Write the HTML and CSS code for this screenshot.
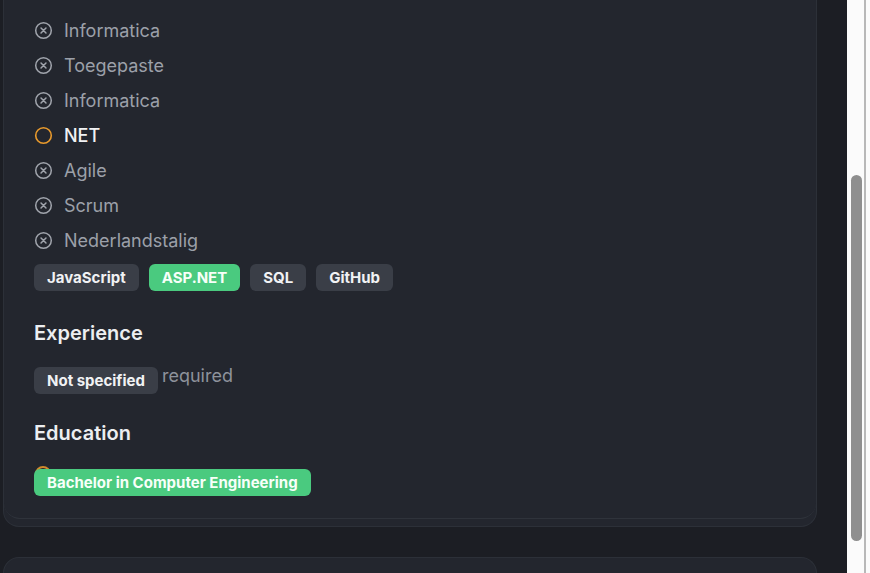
FILE: index.html
```html
<!DOCTYPE html>
<html>
<head>
<meta charset="utf-8">
<link rel="stylesheet" href="styles.css">
</head>
<body>
<div class="app">
  <main class="main">
    <div class="card-wrap">
      <div class="card">
        <ul class="reqs">
          <li class="req miss"><svg class="ic" viewBox="0 0 20 20"><circle cx="10" cy="10" r="8.2" fill="none" stroke="currentColor" stroke-width="1.6"/><path d="M7.4 7.4l5.2 5.2M12.6 7.4l-5.2 5.2" stroke="currentColor" stroke-width="1.6" stroke-linecap="round"/></svg><span>Informatica</span></li>
          <li class="req miss"><svg class="ic" viewBox="0 0 20 20"><circle cx="10" cy="10" r="8.2" fill="none" stroke="currentColor" stroke-width="1.6"/><path d="M7.4 7.4l5.2 5.2M12.6 7.4l-5.2 5.2" stroke="currentColor" stroke-width="1.6" stroke-linecap="round"/></svg><span>Toegepaste</span></li>
          <li class="req miss"><svg class="ic" viewBox="0 0 20 20"><circle cx="10" cy="10" r="8.2" fill="none" stroke="currentColor" stroke-width="1.6"/><path d="M7.4 7.4l5.2 5.2M12.6 7.4l-5.2 5.2" stroke="currentColor" stroke-width="1.6" stroke-linecap="round"/></svg><span>Informatica</span></li>
          <li class="req part"><svg class="ic" viewBox="0 0 20 20"><circle cx="10" cy="10" r="8.2" fill="none" stroke="currentColor" stroke-width="1.7"/></svg><span>NET</span></li>
          <li class="req miss"><svg class="ic" viewBox="0 0 20 20"><circle cx="10" cy="10" r="8.2" fill="none" stroke="currentColor" stroke-width="1.6"/><path d="M7.4 7.4l5.2 5.2M12.6 7.4l-5.2 5.2" stroke="currentColor" stroke-width="1.6" stroke-linecap="round"/></svg><span>Agile</span></li>
          <li class="req miss"><svg class="ic" viewBox="0 0 20 20"><circle cx="10" cy="10" r="8.2" fill="none" stroke="currentColor" stroke-width="1.6"/><path d="M7.4 7.4l5.2 5.2M12.6 7.4l-5.2 5.2" stroke="currentColor" stroke-width="1.6" stroke-linecap="round"/></svg><span>Scrum</span></li>
          <li class="req miss"><svg class="ic" viewBox="0 0 20 20"><circle cx="10" cy="10" r="8.2" fill="none" stroke="currentColor" stroke-width="1.6"/><path d="M7.4 7.4l5.2 5.2M12.6 7.4l-5.2 5.2" stroke="currentColor" stroke-width="1.6" stroke-linecap="round"/></svg><span>Nederlandstalig</span></li>
        </ul>
        <div class="tags">
          <span class="tag">JavaScript</span>
          <span class="tag green">ASP.NET</span>
          <span class="tag">SQL</span>
          <span class="tag">GitHub</span>
        </div>
        <h3 class="sec sec-exp">Experience</h3>
        <div class="exp"><span class="tag">Not specified</span><span class="muted">required</span></div>
        <h3 class="sec sec-edu">Education</h3>
        <div class="edu"><span class="dot"></span><span class="tag green">Bachelor in Computer Engineering</span></div>
      </div>
    </div>
    <div class="card-next"></div>
  </main>
  <div class="scrollbar"><div class="thumb"></div></div>
</div>
</body>
</html>
```
FILE: styles.css
```css
* { box-sizing: border-box; }
html, body { margin: 0; padding: 0; height: 100%; overflow: hidden; }
body { font-family: Inter, "Noto Sans", sans-serif; background: #1c1e24; }
.app { display: flex; height: 573px; }
.main { width: 847px; background: #1c1e24; padding: 0 30px 0 3px; overflow: hidden; }
.card-wrap {
  border: 1px solid #2c3038; border-top: none;
  border-radius: 0 0 16px 16px;
  background: #23262e; padding-bottom: 7px;
}
.card {
  border-bottom: 1px solid #2f333b; border-radius: 0 0 16px 16px;
  background: #23262e; padding: 17px 30px 22px 30px;
}
.reqs { list-style: none; margin: 0; padding: 0; display: flex; flex-direction: column; gap: 8px; }
.req { display: flex; align-items: center; gap: 11px; height: 27px; font-size: 18px; color: #9ca0a9; }
.req .ic { width: 19px; height: 19px; flex: none; }
.req.miss .ic { color: #a0a4ac; }
.req.part .ic { color: #e99a2c; }
.req.part span { color: #f1f2f4; font-weight: 500; }
.tags { display: flex; gap: 10px; margin-top: 10px; }
.tag {
  display: inline-flex; align-items: center; height: 27px; padding: 0 13px;
  border-radius: 6px; background: #3a3e47; color: #f1f2f4;
  font-size: 15px; font-weight: 700;
}
.tag.green { background: #4aca7f; color: #f7fff9; }
.sec { margin: 0; font-size: 20px; font-weight: 600; color: #eceef1; line-height: 26px; }
.sec-exp { margin-top: 29px; }
.sec-edu { margin-top: 26px; }
.exp { display: flex; align-items: flex-start; margin-top: 21px; }
.muted { font-size: 18px; color: #8e929b; margin-left: 4px; line-height: 18px; }
.edu { position: relative; margin-top: 23px; display: flex; }
.edu .dot { position: absolute; left: 1px; top: -3px; width: 16px; height: 16px; border-radius: 50%; border: 2px solid #d08a2c; }
.edu .tag { position: relative; }
.card-next {
  margin-top: 30px; height: 40px; border: 1px solid #2c3038; border-bottom: none;
  border-radius: 16px 16px 0 0; background: #23262e;
}
.scrollbar { width: 23px; background: #fbfbfb; position: relative; padding: 175px 4px 0 4px; display: flex; flex-direction: column; }
.scrollbar::after { content: ""; position: absolute; top: 0; bottom: 0; right: 4px; width: 2px; background: #b8b8b8; }
.thumb { width: 11px; height: 366px; border-radius: 6px; background: #8f8f8f; }
```
